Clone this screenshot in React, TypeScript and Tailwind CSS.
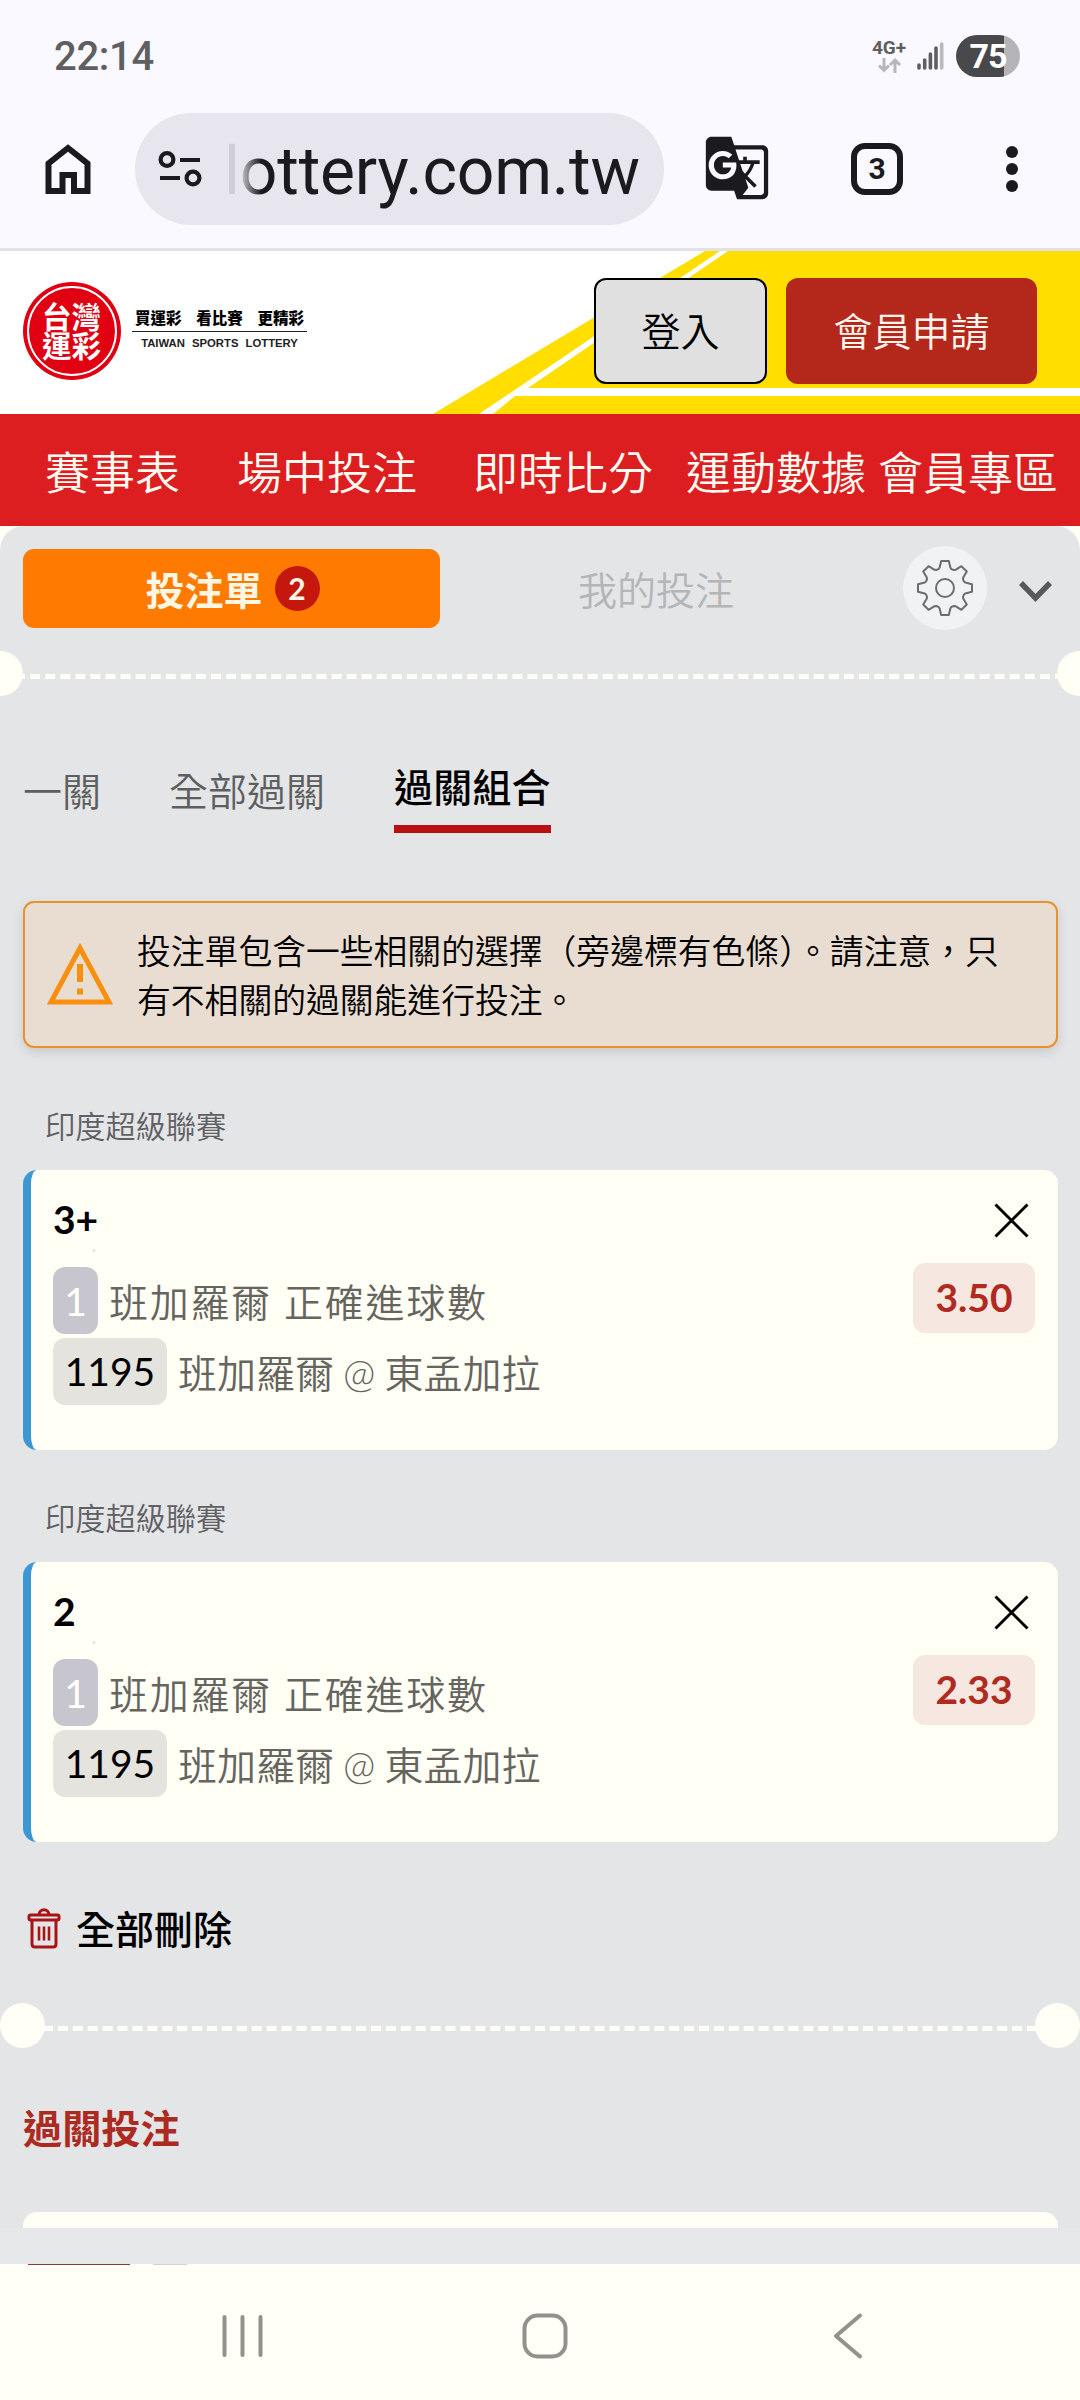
import React from 'react';
import { MdGTranslate } from 'react-icons/md';

interface Bet {
  pick: string;
  odds: string;
}

const bets: Bet[] = [
  { pick: '3+', odds: '3.50' },
  { pick: '2', odds: '2.33' },
];

// Outline of the eight-tooth settings gear, centred on 0,0
const gearPoints = Array.from({ length: 8 }, (_, i) => i * 45)
  .flatMap((a) => [
    [20, a - 19],
    [21, a - 15],
    [27.3, a - 8],
    [27.3, a + 8],
    [21, a + 15],
    [20, a + 19],
  ])
  .map(([r, deg]) => {
    const rad = (deg * Math.PI) / 180;
    return `${(r * Math.sin(rad)).toFixed(2)},${(-r * Math.cos(rad)).toFixed(2)}`;
  })
  .join(' ');

const StatusBar = () => (
  <div className="flex h-[113px] items-start justify-between pl-[54px] pr-[60px] font-['Roboto',sans-serif]">
    <span className="mt-[33px] text-[40px] font-medium leading-[47px] tracking-[-0.3px] text-[#5f5f62]">22:14</span>
    <div className="mt-[35px] flex items-start">
      <div className="mr-[1px] mt-[4px] flex w-[36px] flex-col items-center">
        <span className="text-[19px] font-bold leading-[18px] text-[#5f5f62]">4G+</span>
        <svg className="mt-[1px]" width="26" height="15" viewBox="0 0 26 15" fill="none" stroke="#b7b7bb" strokeWidth="3">
          <path d="M8 0v12M3 7.500l5 5 5-5" />
          <path d="M19 15V2M14 7l5-5 5 5" />
        </svg>
      </div>
      <svg className="ml-[9px] mt-[6px]" width="27" height="30" viewBox="0 0 27 30" strokeWidth="3.600" strokeLinecap="round" stroke="#5f5f62">
        <path d="M2 24v3M7.700 19v8M13.400 13v14M19 7v20" />
        <path d="M24.700 3v24" stroke="#b9b9bd" />
      </svg>
      <div className="ml-[12px] flex h-[42px] w-[64px] items-center justify-center rounded-full bg-linear-to-r from-[#49494b] from-75% to-[#b5b5b9] to-75%">
        <span className="text-[34px] font-bold leading-none tracking-[-1px] text-white">75</span>
      </div>
    </div>
  </div>
);

const AddressBar = () => (
  <div className="flex h-[135px] items-start pl-[44px]">
    <svg className="mt-[29px]" width="48" height="54" viewBox="0 0 48 54" fill="none" stroke="#1b1b1f" strokeWidth="6">
      <path d="M4.500 49V21.500L24 6l19.500 15.500V49H30V33H18.500v16z" />
    </svg>
    <div className="ml-[43px] flex h-[112px] w-[529px] items-center rounded-full bg-[#e7e6ee]">
      <svg className="ml-[23px]" width="44" height="38" viewBox="0 0 44 38" fill="none" stroke="#1b1b1f" strokeWidth="4.200">
        <circle cx="9" cy="9.500" r="6.400" />
        <path d="M22 10h20M2 28h20" />
        <circle cx="35" cy="28" r="6.400" />
      </svg>
      <span className="ml-[22px] mt-[6px] bg-linear-to-r from-[#cfced6] from-[4%] to-[#1b1b1f] to-[9%] bg-clip-text font-['Roboto',sans-serif] text-[66px] leading-[80px] tracking-[-0.2px] text-transparent">
        lottery.com.tw
      </span>
    </div>
    <MdGTranslate className="ml-[39px] mt-[21px]" size={68} color="#1b1b1f" />
    <div className="ml-[80px] mt-[30px] flex h-[52px] w-[52px] items-center justify-center rounded-[14px] border-[6px] border-[#1b1b1f] font-['Roboto',sans-serif] text-[30px] font-bold leading-none text-[#1b1b1f]">
      3
    </div>
    <svg className="ml-[103px] mt-[32px]" width="12" height="48" viewBox="0 0 12 48" fill="#1b1b1f">
      <circle cx="6" cy="7" r="6" />
      <circle cx="6" cy="24" r="6" />
      <circle cx="6" cy="41" r="6" />
    </svg>
  </div>
);

const SiteHeader = () => (
  <header className="relative flex h-[166px] items-start border-t-[3px] border-[#e2e2e6] bg-white pl-[23px]">
    {/* Yellow stripes behind the buttons */}
    <svg className="absolute inset-0" width="1080" height="163" viewBox="0 0 1080 163" fill="#ffde00">
      <path d="M705 0h15L479 163h-46z" />
      <path d="M728 0h352v137H528z" />
      <path d="M515 145h565v18H493z" />
    </svg>
    <div className="relative mt-[31px] flex h-[98px] w-[98px] items-center justify-center rounded-full bg-[#e00012]">
      <div className="flex h-[90px] w-[90px] items-center justify-center rounded-full border-2 border-white">
        <span className="w-[60px] break-all text-[29.500px] font-bold leading-[29px] text-white">台灣運彩</span>
      </div>
    </div>
    <div className="relative ml-[11px] mt-[56px] w-[175px] text-center">
      <div className="flex h-[25px] justify-between border-b border-[#222] px-[3px] text-[15.5px] font-black leading-[22px] text-black">
        <span>買運彩</span>
        <span>看比賽</span>
        <span>更精彩</span>
      </div>
      <div className="mt-[4px] whitespace-nowrap font-['Liberation_Sans',sans-serif] text-[11.3px] font-bold leading-[14px] text-[#222] [word-spacing:4px]">
        TAIWAN SPORTS LOTTERY
      </div>
    </div>
    <button className="relative ml-[287px] mt-[27px] h-[106px] w-[173px] rounded-[12px] border-2 border-black bg-[#e0e0e0] pt-[1px] text-[39px] font-[350] leading-none text-black">
      登入
    </button>
    <button className="relative ml-[19px] mt-[27px] h-[106px] w-[251px] rounded-[12px] bg-[#b4281b] pt-[1px] text-[39px] font-[350] leading-none text-[#fff5ec]">
      會員申請
    </button>
  </header>
);

const MainNav = () => (
  <nav className="flex h-[112px] items-center whitespace-nowrap bg-[#dc1e20] pl-[45px] pt-[6px] text-[45px] font-[350] leading-none text-[#fffaf2]">
    <span className="w-[192px]">賽事表</span>
    <span className="w-[236px]">場中投注</span>
    <span className="w-[213px]">即時比分</span>
    <span className="w-[192px]">運動數據</span>
    <span>會員專區</span>
  </nav>
);

const SlipTabs = () => (
  <div className="flex h-[125px] items-start pl-[23px]">
    <div className="mt-[23px] flex h-[79px] w-[417px] items-center justify-center gap-[12px] rounded-[11px] bg-[#ff7a00] pl-[2px]">
      <span className="pt-[3px] text-[39px] font-bold leading-none text-[#fff6e4]">投注單</span>
      <span className="flex h-[45px] w-[45px] items-center justify-center rounded-full bg-[#c4180e] pb-[1px] text-[30px] font-bold leading-none text-[#fff6e4]">2</span>
    </div>
    <span className="ml-[138px] mt-[45px] text-[39px] font-[350] leading-[39px] text-[#b3b5b7]">我的投注</span>
    <div className="ml-[169px] mt-[20px] flex h-[84px] w-[84px] items-center justify-center rounded-full bg-[#f1f2f4]">
      <svg width="60" height="60" viewBox="-30 -30 60 60" fill="none" stroke="#6b6c6e" strokeWidth="2" strokeLinejoin="round">
        <polygon points={gearPoints} />
        <circle r="9" />
      </svg>
    </div>
    <svg className="ml-[31px] mt-[54px]" width="36" height="24" viewBox="0 0 36 24" fill="none" stroke="#58595b" strokeWidth="5.500">
      <path d="M3 3l14.500 15L32 3" />
    </svg>
  </div>
);

const Perforation = ({ inset = false }: { inset?: boolean }) => (
  <div className={`flex h-[45px] items-center justify-between ${inset ? '' : '-mx-[22px]'}`}>
    <div className="h-[45px] w-[45px] shrink-0 rounded-full bg-[#fffff5]" />
    <div className={`h-0 flex-1 border-t-[5px] border-dashed border-[#fffef8] ${inset ? 'mx-[-2px] mt-[6px]' : '-mx-[23px] mt-[5px]'}`} />
    <div className="h-[45px] w-[45px] shrink-0 rounded-full bg-[#fffff5]" />
  </div>
);

const Notice = () => (
  <div className="mx-[22px] ml-[23px] flex h-[147px] rounded-[11px] border-2 border-[#e8922e] bg-[#e9ddd2] shadow-[0_4px_12px_rgba(0,0,0,0.12)]">
    <svg className="ml-[20px] mt-[39px] shrink-0" width="70" height="64" viewBox="0 0 70 64" fill="none" stroke="#f98f0f" strokeWidth="5">
      <path d="M35 6L6 60h58z" />
      <path d="M35 22v18M35 46.500v6" strokeWidth="6" />
    </svg>
    <p className="ml-[22px] mt-[24px] w-[880px] text-[33.8px] font-[350] leading-[49px] text-black">
      投注單包含一些相關的選擇（旁邊標有色條）。請注意，只有不相關的過關能進行投注。
    </p>
  </div>
);

const BetCard = ({ pick, odds }: Bet) => (
  <>
    <div className="ml-[45px] h-[43px] text-[30.200px] font-[350] leading-[43px] text-[#5f6063]">印度超級聯賽</div>
    <div className="ml-[23px] mr-[22px] mt-[22px] flex h-[280px] justify-between rounded-[14px] border-l-[8px] border-[#3d97d3] bg-[#fffff5] pl-[22px] pr-[23px]">
      <div className="pt-[30px]">
        <div className="h-[40px] text-[39px] font-bold leading-[39px] text-black">{pick}</div>
        <div className="ml-[40px] mt-[9px] h-[3px] w-[2px] rounded-full bg-[#dcdcd6]" />
        <div className="mt-[15px] flex items-center text-[39px] leading-none">
          <span className="flex h-[67px] w-[45px] items-center justify-center rounded-[12px] bg-[#c7c6ce] pt-[1px] text-[#fffffb]">1</span>
          <span className="ml-[11px] pt-[4px] font-[350] tracking-[1.7px] text-[#66645f]">班加羅爾 正確進球數</span>
        </div>
        <div className="mt-[4px] flex items-center text-[39px] leading-none">
          <span className="flex h-[67px] w-[114px] items-center justify-center rounded-[12px] bg-[#e5e3dd] text-black">1195</span>
          <span className="ml-[11px] pt-[3px] font-[350] text-[#66645f] [word-spacing:-1.5px]">班加羅爾 @ 東孟加拉</span>
        </div>
      </div>
      <div className="flex flex-col items-end">
        <svg className="mr-[6px] mt-[33px]" width="35" height="35" viewBox="0 0 35 35" fill="none" stroke="#000" strokeWidth="3">
          <path d="M1.500 1.500l32 32M33.500 1.500l-32 32" />
        </svg>
        <span className="mt-[25px] flex h-[70px] w-[122px] items-center justify-center rounded-[12px] bg-[#f6e7e1] pb-[2px] text-[39px] font-bold leading-none text-[#b02a20]">
          {odds}
        </span>
      </div>
    </div>
  </>
);

const SystemNav = () => (
  <div className="flex h-[135px] items-start bg-[#fffef7]">
    <svg className="ml-[222px] mt-[49px]" width="42" height="44" viewBox="0 0 42 44" stroke="#92918c" strokeWidth="4" strokeLinecap="round">
      <path d="M2.500 3v38M20.500 3v38M38.500 3v38" />
    </svg>
    <svg className="ml-[257px] mt-[48px]" width="48" height="46" viewBox="0 0 48 46" fill="none" stroke="#92918c" strokeWidth="4">
      <rect x="3.500" y="2.500" width="41" height="41" rx="13" />
    </svg>
    <svg className="ml-[263px] mt-[47px]" width="32" height="48" viewBox="0 0 32 48" fill="none" stroke="#92918c" strokeWidth="4" strokeLinecap="round" strokeLinejoin="round">
      <path d="M28 3.500L4 24l24 20.500" />
    </svg>
  </div>
);

export default function App() {
  return (
    <div className="h-[2400px] w-[1080px] overflow-hidden bg-[#f9f9ff] font-['Lato','Noto_Sans_CJK_TC',sans-serif]">
      <StatusBar />
      <AddressBar />
      <SiteHeader />
      <MainNav />
      <div className="bg-[#fffff5]">
        <main className="h-[1702px] overflow-hidden rounded-t-[24px] bg-[#e4e5e7]">
          <SlipTabs />
          <Perforation />

          {/* Bet type tabs */}
          <div className="ml-[23px] mt-[66px] flex items-start text-[39px] font-[350] leading-[52px] text-[#5d5e60]">
            <span className="mt-[3px] w-[146px]">一關</span>
            <span className="mt-[3px] w-[225px]">全部過關</span>
            <span className="h-[71px] border-b-[8px] border-[#b81015] font-medium leading-[50px] tracking-[0.2px] text-black">過關組合</span>
          </div>

          <div className="mt-[68px]">
            <Notice />
          </div>

          <div className="mt-[57px] space-y-[47px]">
            {bets.map((bet) => (
              <div key={bet.pick}>
                <BetCard {...bet} />
              </div>
            ))}
          </div>

          <div className="ml-[27px] mt-[65px] flex h-[42px] items-center">
            <svg width="34" height="44" viewBox="0 0 34 44" fill="none" stroke="#a91217" strokeWidth="3" strokeLinejoin="round">
              <path d="M12 9c0-7 10-7 10 0" />
              <rect x="2" y="9" width="30" height="5" rx="1.500" />
              <path d="M5 14v24c0 2 1 3 3 3h18c2 0 3-1 3-3V14" />
              <path d="M12 20.500v14M17 20.500v14M22 20.500v14" strokeWidth="2.600" />
            </svg>
            <span className="ml-[15px] pt-[2px] text-[39px] font-medium leading-none text-black">全部刪除</span>
          </div>

          <div className="mt-[54px]">
            <Perforation inset />
          </div>

          <h2 className="ml-[23px] mt-[54px] h-[52px] text-[39.2px] font-bold leading-[52px] text-[#ad2a20]">過關投注</h2>
          <div className="ml-[23px] mr-[22px] mt-[58px] h-[40px] rounded-t-[14px] bg-[#fffff5]" />
        </main>
        <div className="h-[36px] bg-[#e6e7e9]" />
        {/* Top edge of the row hidden under the system bar */}
        <div className="flex h-[1px] pl-[28px]">
          <div className="w-[102px] bg-[#8e3a38]" />
          <div className="ml-[23px] w-[34px] bg-[#d2d2d4]" />
        </div>
      </div>
      <SystemNav />
    </div>
  );
}
